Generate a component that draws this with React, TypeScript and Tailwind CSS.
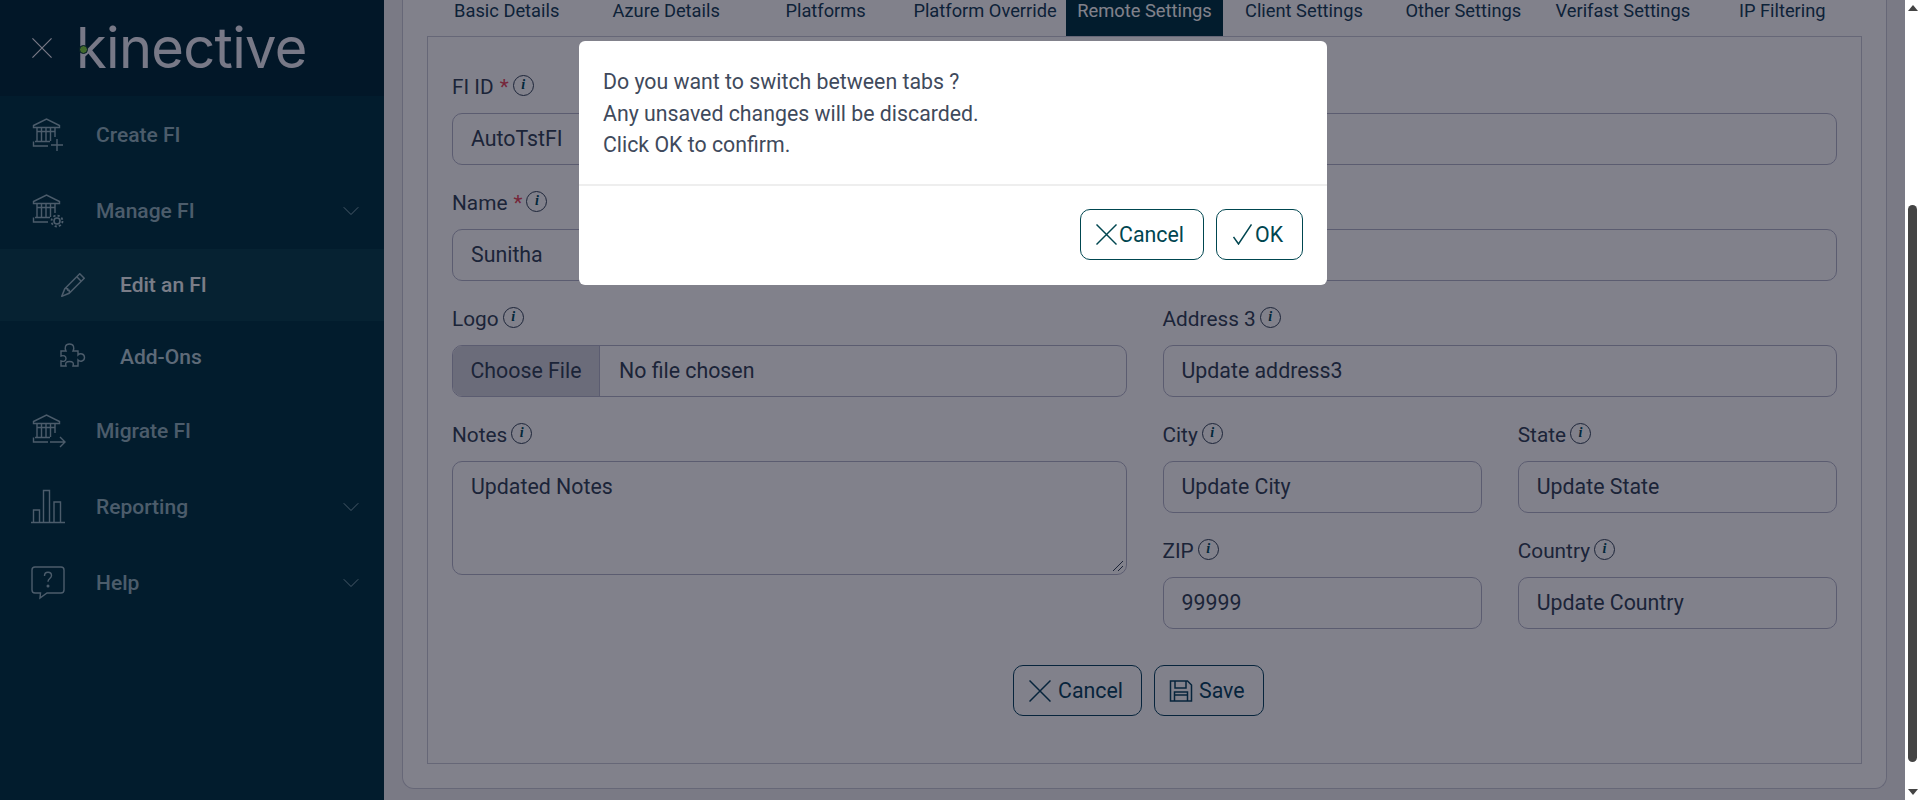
import { ChevronDown } from "lucide-react";
import { BsPencil } from "react-icons/bs";

const tabs = ["Basic Details", "Azure Details", "Platforms", "Platform Override", "Remote Settings", "Client Settings", "Other Settings", "Verifast Settings", "IP Filtering"];

function Bank({ children }: { children?: React.ReactNode }) {
  return (
    <svg width="36" height="36" viewBox="0 0 36 36" fill="none" stroke="#95b5bf" strokeWidth="1.4" className="shrink-0">
      <path d="M3.5 8.500 16.500 2l13 6.500v2h-26z" />
      <path d="M7 11v13M11.500 11v13M16 11v13M20.500 11v13M25 11v9M7 14.500h18" />
      <path d="M5 24.500h15M3.500 24.500v4.500h14.500" />
      {children}
    </svg>
  );
}

function CreateIcon() {
  return (
    <Bank>
      <path d="M27 22v12M21 28h12" />
    </Bank>
  );
}

function GearBankIcon() {
  return (
    <Bank>
      <circle cx="27" cy="28" r="3" strokeWidth="1.6" />
      <circle cx="27" cy="28" r="5.500" strokeWidth="1.8" strokeDasharray="2.2 2.1" />
    </Bank>
  );
}

function MigrateIcon() {
  return (
    <Bank>
      <path d="M20 29h15M30 24l5 5-5 5" />
    </Bank>
  );
}

function ChartIcon() {
  return (
    <svg width="36" height="36" viewBox="0 0 36 36" fill="none" stroke="#95b5bf" strokeWidth="1.4" className="shrink-0">
      <path d="M1 33.500h34M3.500 33V21h6v12M13.500 33V1.500h6V33M24 33V13h6.500v20" />
    </svg>
  );
}

function HelpIcon() {
  return (
    <svg width="36" height="36" viewBox="0 0 36 36" fill="none" stroke="#95b5bf" strokeWidth="1.4" className="shrink-0">
      <path d="M5 2h26a3 3 0 0 1 3 3v20a3 3 0 0 1-3 3H17l-7 5 .5-5H5a3 3 0 0 1-3-3V5a3 3 0 0 1 3-3z" />
      <path d="M14.500 11c0-2.500 1.600-3.700 3.500-3.700s3.500 1.200 3.500 3.300c0 3-3.500 3-3.500 6.200" />
      <circle cx="18" cy="21" r=".8" fill="#95b5bf" />
    </svg>
  );
}

function PuzzleIcon() {
  return (
    <svg width="36" height="36" viewBox="0 0 36 36" fill="none" stroke="#95b5bf" strokeWidth="1.4" className="shrink-0">
      <path d="M6 12h5c-1.500-3-1-7 3.500-7s5 4 3.500 7h5v4c2-2 6.500-1.500 6.500 2.500S25 23 23 21v6h-5c1-3 0-4.500-3.500-4.500S10 24 11 27H6v-5c2.500 1 5 0 5-2.500S8.500 16 6 17z" />
    </svg>
  );
}

function CrossIcon({ size, strokeWidth = 1.5 }: { size: number; strokeWidth?: number }) {
  return (
    <svg width={size} height={size} viewBox="0 0 22 22" fill="none" stroke="currentColor" strokeWidth={strokeWidth} className="shrink-0">
      <path d="M.5.500l21 21M21.500.500l-21 21" />
    </svg>
  );
}

function NavRow({ icon, label, chevron }: { icon: React.ReactNode; label: string; chevron?: boolean }) {
  return (
    <div className="flex h-[76px] items-center pl-[30px] pr-[19px]">
      {icon}
      <span className="ml-[30px] flex-1 pt-[2px] text-[21px] font-medium text-[#95b5bf]">{label}</span>
      {chevron && <ChevronDown size={28} strokeWidth={0.8} className="text-[#95b5bf]" />}
    </div>
  );
}

function SubRow({ icon, label, active }: { icon: React.ReactNode; label: string; active?: boolean }) {
  return (
    <div className={active ? "flex h-[72px] items-center bg-[#09414d] pl-[60px]" : "flex h-[72px] items-center pl-[60px]"}>
      <span className="flex w-[26px] justify-center text-[#95b5bf]">{icon}</span>
      <span className={active ? "ml-[34px] pt-[2px] text-[21px] font-medium text-[#f0f6f8]" : "ml-[34px] pt-[2px] text-[21px] font-medium text-[#b9d0d8]"}>{label}</span>
    </div>
  );
}

function InfoIcon() {
  return (
    <span className="ml-1 mb-1 flex h-[21px] w-[21px] items-center justify-center rounded-full border border-[#354559] font-['Liberation_Serif',serif] text-[14px] font-bold italic leading-none text-[#004b5c]">
      i
    </span>
  );
}

function FieldLabel({ label, required }: { label: string; required?: boolean }) {
  return (
    <div className="mb-3 flex h-7 items-center text-[20.8px] leading-7 text-[#354559]">
      <span>{label}</span>
      {required && <span className="ml-1.5 text-[#e8485a]">*</span>}
      <InfoIcon />
    </div>
  );
}

function Field({ label, value, required }: { label: string; value?: string; required?: boolean }) {
  return (
    <div className="mb-6 min-w-0">
      <FieldLabel label={label} required={required} />
      <div className="flex h-[52px] items-center rounded-[10px] border border-[#b3b5c9] px-[18px] text-[21.33px] text-[#354559]">{value}</div>
    </div>
  );
}

export default function App() {
  return (
    <div className="relative flex h-[800px] w-[1920px] overflow-hidden bg-white font-['Roboto',sans-serif]">
      {/* Sidebar */}
      <aside className="flex w-[384px] shrink-0 flex-col bg-[#003543]">
        <div className="flex h-[96px] items-center bg-[#002a39] pl-[32px]">
          <div className="text-[#f0f0f5]">
            <CrossIcon size={20} strokeWidth={1.3} />
          </div>
          <span className="relative ml-[24px] font-['Inter',sans-serif] text-[56px] font-normal leading-none tracking-[-0.7px] text-[#eceef6]">
            kinective
            <span className="absolute left-[3px] top-[25px] h-[9px] w-[9px] rounded-full border border-[#002a39] bg-[#7fce3f]" />
          </span>
        </div>
        <div className="pt-px">
          <NavRow icon={<CreateIcon />} label="Create FI" />
          <NavRow icon={<GearBankIcon />} label="Manage FI" chevron />
          <SubRow icon={<BsPencil size={24} />} label="Edit an FI" active />
          <SubRow icon={<PuzzleIcon />} label="Add-Ons" />
          <NavRow icon={<MigrateIcon />} label="Migrate FI" />
          <NavRow icon={<ChartIcon />} label="Reporting" chevron />
          <NavRow icon={<HelpIcon />} label="Help" chevron />
        </div>
      </aside>

      {/* Main content */}
      <main className="min-w-0 flex-1 bg-[#f1f1f3] pl-[18px] pr-[18px]">
        <div className="h-[789px] rounded-b-xl border-x border-b border-[#c9cad6] bg-white px-6">
          <div className="grid h-9 grid-cols-9">
            {tabs.map((tab) => (
              <div
                key={tab}
                className={
                  tab === "Remote Settings"
                    ? "mx-px bg-[#003543] text-center text-[18.3px] leading-[22px] text-white"
                    : "text-center text-[18.3px] leading-[22px] text-[#164058]"
                }
              >
                {tab}
              </div>
            ))}
          </div>
          <div className="h-[728px] border border-[#c9cad6] px-6 pt-9">
            <div className="grid grid-cols-2 gap-x-9">
              <div>
                <Field label="FI ID" value="AutoTstFI" required />
                <Field label="Name" value="Sunitha" required />
                <div className="mb-6">
                  <FieldLabel label="Logo" />
                  <div className="flex h-[52px] items-center overflow-hidden rounded-[10px] border border-[#b3b5c9] text-[21.33px] text-[#354559]">
                    <div className="flex h-full w-[147px] items-center justify-center border-r border-[#b3b5c9] bg-[#d3d5dd]">Choose File</div>
                    <div className="pl-[19px]">No file chosen</div>
                  </div>
                </div>
                <div>
                  <FieldLabel label="Notes" />
                  <div className="relative h-[114px] rounded-[10px] border border-[#b3b5c9] px-[18px] pt-[11px] text-[21.33px] leading-7 text-[#354559]">
                    Updated Notes
                    <svg width="12" height="12" viewBox="0 0 12 12" fill="none" stroke="#354559" className="absolute bottom-0.5 right-0.5">
                      <path d="M1 11 11 1M6 11l5-5" />
                    </svg>
                  </div>
                </div>
              </div>
              <div>
                <Field label="Address 1" />
                <Field label="Address 2" />
                <Field label="Address 3" value="Update address3" />
                <div className="grid grid-cols-2 gap-x-9">
                  <Field label="City" value="Update City" />
                  <Field label="State" value="Update State" />
                  <Field label="ZIP" value="99999" />
                  <Field label="Country" value="Update Country" />
                </div>
              </div>
            </div>
            <div className="mt-3 flex justify-center gap-3 pr-[12px] text-[21.33px] text-[#0a4560]">
              <div className="flex h-[51px] w-[129px] items-center rounded-[10px] border border-[#0a4560] pl-[15px]">
                <CrossIcon size={22} />
                <span className="ml-[7px]">Cancel</span>
              </div>
              <div className="flex h-[51px] w-[110px] items-center rounded-[10px] border border-[#0a4560] pl-[14px]">
                <svg width="24" height="24" viewBox="0 0 24 24" fill="none" stroke="currentColor" strokeWidth="1.5" className="shrink-0">
                  <path d="M1.500 2h17l4 4v16h-21zM6 2v7h11V2M5.500 22v-9h13v9M5.500 16h13" />
                </svg>
                <span className="ml-[6px]">Save</span>
              </div>
            </div>
          </div>
        </div>
      </main>

      {/* Scrollbar */}
      <div className="flex w-[15px] shrink-0 flex-col items-center bg-white">
        <svg width="10" height="6" viewBox="0 0 10 6" className="mt-[5px] fill-[#444]">
          <path d="M5 0l5 6H0z" />
        </svg>
        <div className="mt-[194px] h-[557px] w-[9px] rounded-b-full rounded-t-full bg-[#444]" />
        <svg width="10" height="6" viewBox="0 0 10 6" className="mt-[27px] fill-[#444]">
          <path d="M5 6 10 0H0z" />
        </svg>
      </div>

      {/* Modal backdrop */}
      <div className="absolute inset-y-0 left-0 right-[15px] bg-[#030317]/50" />

      {/* Confirm dialog */}
      <div className="absolute left-[579px] top-[41px] h-[244px] w-[748px] rounded-md bg-white">
        <div className="border-b-2 border-[#eeeeee] px-6 pb-[23px] pt-[25px] text-[21.3px] leading-[31.500px] text-[#3f4a5c]">
          <p>Do you want to switch between tabs ?</p>
          <p>Any unsaved changes will be discarded.</p>
          <p>Click OK to confirm.</p>
        </div>
        <div className="flex justify-end gap-3 px-6 pt-[23px] text-[21.33px] text-[#004650]">
          <div className="flex h-[51px] w-[124px] items-center rounded-[10px] border border-[#004650] pl-[15px]">
            <CrossIcon size={21} />
            <span className="ml-[2px] pt-px">Cancel</span>
          </div>
          <div className="flex h-[51px] w-[87px] items-center rounded-[10px] border border-[#004650] pl-[16px]">
            <svg width="19" height="21" viewBox="0 0 19 21" fill="none" stroke="currentColor" strokeWidth="1.5" className="shrink-0">
              <path d="M.5 13l5 7L18.500.500" />
            </svg>
            <span className="ml-[3px] pt-px">OK</span>
          </div>
        </div>
      </div>
    </div>
  );
}
